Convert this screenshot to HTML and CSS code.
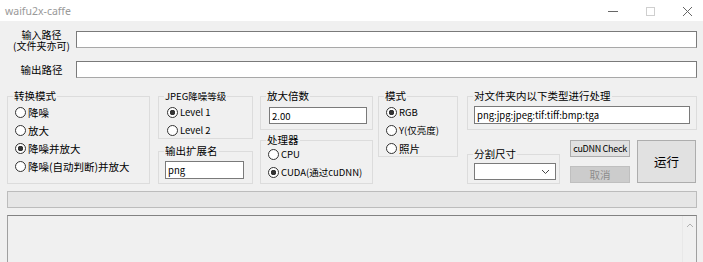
FILE: index.html
```html
<!DOCTYPE html>
<html lang="zh">

<head>
    <meta charset="UTF-8" />
    <meta name="viewport" content="width=device-width, initial-scale=1.0" />
    <title>waifu2x-caffe</title>
    <link rel="stylesheet" href="styles.css">
</head>

<body>
    <div class="titlebar">
        <span class="app-title">waifu2x-caffe</span>
        <div class="win-ctrls">
            <span class="ctrl">
                <svg width="16" height="16" viewBox="0 0 16 16"><path d="M3 8.5h10" stroke="#666" stroke-width="1" /></svg>
            </span>
            <span class="ctrl">
                <svg width="16" height="16" viewBox="0 0 16 16"><rect x="4.5" y="4.5" width="8" height="8" fill="none" stroke="#cfcfcf" /></svg>
            </span>
            <span class="ctrl">
                <svg width="16" height="16" viewBox="0 0 16 16"><path d="M4 4l9 9M13 4l-9 9" stroke="#666" stroke-width="1" /></svg>
            </span>
        </div>
    </div>

    <div class="main">
        <div class="path-row row1">
            <label class="path-label two-line"><span>输入路径</span><span>(文件夹亦可)</span></label>
            <input type="text" class="path-input" />
        </div>
        <div class="path-row row2">
            <label class="path-label">输出路径</label>
            <input type="text" class="path-input" />
        </div>

        <div class="options">
            <fieldset class="grp g-mode">
                <legend>转换模式</legend>
                <label class="radio"><input type="radio" name="mode" />降噪</label>
                <label class="radio"><input type="radio" name="mode" />放大</label>
                <label class="radio"><input type="radio" name="mode" checked />降噪并放大</label>
                <label class="radio"><input type="radio" name="mode" />降噪(自动判断)并放大</label>
            </fieldset>

            <div class="col col2">
                <fieldset class="grp g-jpeg">
                    <legend class="small">JPEG降噪等级</legend>
                    <label class="radio latin"><input type="radio" name="level" checked />Level 1</label>
                    <label class="radio latin"><input type="radio" name="level" />Level 2</label>
                </fieldset>
                <fieldset class="grp g-ext">
                    <legend>输出扩展名</legend>
                    <input type="text" class="field-input" value="png" />
                </fieldset>
            </div>

            <div class="col col3">
                <fieldset class="grp g-scale">
                    <legend>放大倍数</legend>
                    <input type="text" class="field-input" value="2.00" />
                </fieldset>
                <fieldset class="grp g-proc">
                    <legend>处理器</legend>
                    <div class="radio-list">
                        <label class="radio latin"><input type="radio" name="proc" />CPU</label>
                        <label class="radio latin"><input type="radio" name="proc" checked />CUDA(通过cuDNN)</label>
                    </div>
                </fieldset>
            </div>

            <div class="col col4">
                <fieldset class="grp g-color">
                    <legend>模式</legend>
                    <label class="radio latin"><input type="radio" name="color" checked />RGB</label>
                    <label class="radio latin"><input type="radio" name="color" />Y(仅亮度)</label>
                    <label class="radio"><input type="radio" name="color" />照片</label>
                </fieldset>
            </div>

            <div class="col col5">
                <fieldset class="grp g-ext-list">
                    <legend>对文件夹内以下类型进行处理</legend>
                    <input type="text" class="field-input" value="png:jpg:jpeg:tif:tiff:bmp:tga" />
                </fieldset>
                <div class="action-row">
                    <fieldset class="grp g-split">
                        <legend>分割尺寸</legend>
                        <div class="select">
                            <svg width="9" height="6" viewBox="0 0 9 6"><path d="M1 1l3.5 3.5L8 1" fill="none" stroke="#444" /></svg>
                        </div>
                    </fieldset>
                    <div class="btn-col">
                        <button class="btn btn-check">cuDNN Check</button>
                        <button class="btn btn-cancel" disabled>取消</button>
                    </div>
                    <button class="btn btn-run">运行</button>
                </div>
            </div>
        </div>

        <div class="progress"></div>

        <div class="log">
            <div class="scrollbar">
                <svg width="8" height="6" viewBox="0 0 8 6"><path d="M1 5l3-3 3 3" fill="none" stroke="#b0b0b0" /></svg>
            </div>
        </div>
    </div>
</body>

</html>
```

FILE: styles.css
```css
* {
    box-sizing: border-box;
}

body {
    margin: 0;
    background-color: #f0f0f0;
    font-family: "Noto Sans CJK SC", "Noto Sans", sans-serif;
    font-size: 10.5px;
    color: #000;
    overflow: hidden;
}

.titlebar {
    height: 21px;
    background: #fff;
    display: flex;
    align-items: center;
    justify-content: space-between;
    padding-left: 5px;
}

.app-title {
    font-family: "Noto Sans", sans-serif;
    font-size: 10.5px;
    color: #999;
}

.win-ctrls {
    display: flex;
    gap: 21px;
    padding-right: 8px;
}

.ctrl {
    width: 16px;
    height: 16px;
    display: flex;
}

.main {
    padding: 0 6px 0 7px;
}

.path-row {
    display: grid;
    grid-template-columns: 69px 1fr;
    align-items: center;
}

.row1 {
    margin-top: 9px;
    align-items: start;
}

.row2 {
    margin-top: 10px;
}

.path-label {
    text-align: center;
    line-height: 12px;
}

.two-line {
    display: flex;
    flex-direction: column;
    align-items: center;
    font-size: 10px;
    line-height: 11px;
    margin-top: -1px;
}

.path-input {
    height: 17px;
    border: 1px solid #7a7a7a;
    border-bottom-color: #a8a8a8;
    background: #fff;
    margin: 0;
}

.row1 .path-input {
    margin-top: 1px;
}

.options {
    display: flex;
    margin-top: 11px;
}

fieldset.grp {
    margin: 0;
    padding: 0 6px;
    border: 1px solid #dcdcdc;
    min-width: 0;
}

legend {
    font-size: 10.5px;
    line-height: 14px;
    padding: 0 1px;
    margin-left: -1px;
}

legend.small {
    font-size: 9.5px;
}

.radio {
    display: flex;
    align-items: center;
    height: 18px;
    padding-left: 1px;
    white-space: nowrap;
}

.radio input {
    appearance: none;
    -webkit-appearance: none;
    width: 11px;
    height: 11px;
    border: 1px solid #333;
    border-radius: 50%;
    background: #fff;
    margin: 0 2px 0 0;
}

.radio input:checked {
    background: radial-gradient(circle, #333 0, #333 2.5px, #fff 3px);
}

.latin {
    font-size: 9.5px;
}

.field-input {
    display: block;
    width: 100%;
    height: 18px;
    margin: 0;
    border: 1px solid #7a7a7a;
    background: #fff;
    font-family: "Noto Sans CJK SC", "Noto Sans", sans-serif;
    font-size: 9.5px;
    padding: 0 2px;
}

.g-mode {
    width: 143px;
    height: 95px;
}

.col {
    display: flex;
    flex-direction: column;
}

.col2 {
    margin-left: 8px;
    width: 95px;
}

.g-jpeg {
    height: 50px;
}

.g-jpeg .radio {
    padding-left: 2px;
}

.g-ext {
    margin-top: 5px !important;
    height: 40px;
}

.g-ext .field-input {
    margin-top: 3px;
    width: 79px;
}

.col3 {
    margin-left: 7px;
    width: 113px;
}

.g-scale {
    height: 41px;
}

.g-scale .field-input {
    margin-top: 4px;
    height: 17px;
    width: 98px;
    margin-left: 2px;
}

.g-proc {
    margin-top: 3px !important;
    height: 51px;
}

.radio-list {
    margin-top: -2px;
}

.col4 {
    margin-left: 5px;
    width: 80px;
}

.g-color {
    height: 68px;
}

.col5 {
    margin-left: 9px;
    width: 230px;
}

.g-ext-list {
    height: 41px;
}

.g-ext-list .field-input {
    margin-top: 3px;
}

.action-row {
    display: flex;
    margin-top: 10px;
}

.g-split {
    width: 93px;
    height: 37px;
    margin-top: 7px !important;
}

.select {
    height: 17px;
    width: 82px;
    margin-top: 2px;
    border: 1px solid #7a7a7a;
    background: #fff;
    display: flex;
    align-items: center;
    justify-content: flex-end;
    padding-right: 5px;
}

.btn-col {
    display: flex;
    flex-direction: column;
    gap: 9px;
    margin-left: 10px;
    width: 60px;
}

.btn {
    margin: 0;
    padding: 0;
    border: 1px solid #adadad;
    background: #e1e1e1;
    color: #000;
    font-family: "Noto Sans CJK SC", "Noto Sans", sans-serif;
}

.btn-check {
    height: 17px;
    font-size: 9px;
    letter-spacing: -0.3px;
}

.btn-cancel {
    height: 17px;
    font-size: 10.5px;
    background: #cccccc;
    border-color: #bfbfbf;
    color: #8c8c8c;
}

.btn-run {
    margin-left: 7px;
    width: 59px;
    height: 43px;
    font-size: 12.5px;
}

.progress {
    margin-top: 7px;
    height: 17px;
    border: 1px solid #bcbcbc;
    background: #e6e6e6;
}

.log {
    margin-top: 7px;
    height: 48px;
    border: 1px solid #a0a0a0;
    border-top-color: #828282;
    border-bottom: none;
    display: flex;
    justify-content: flex-end;
}

.scrollbar {
    width: 14px;
    border-left: 1px solid #e8e8e8;
    background: #f0f0f0;
    display: flex;
    justify-content: center;
    padding-top: 6px;
}
```
